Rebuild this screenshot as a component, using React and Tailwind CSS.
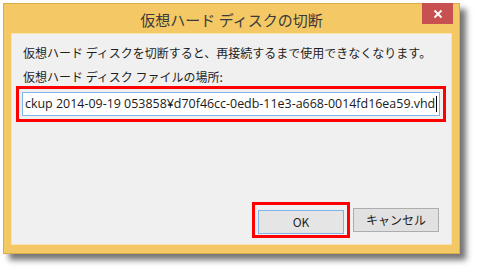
const JP = { fontFamily: '"Noto Sans CJK JP", "Noto Sans", sans-serif' };

function RedBox({ className, children }) {
  return <div className={`border-[3px] border-[#ff0000] p-[3px] ${className}`}>{children}</div>;
}

export default function App() {
  return (
    <div className="w-[477px] h-[271px] bg-white pt-[3px] pl-[3px]" style={JP}>
      <div className="w-[457px] h-[251px] bg-[#f4c965] border border-[#d9ac4c] shadow-[6px_6px_6px_rgba(0,0,0,0.55)] flex flex-col px-[7px] pb-[8px]">
        {/* title bar */}
        <div className="relative h-[29px] flex items-center justify-center">
          <span className="text-[15px] text-[#3a3a3a] leading-none pt-[2px]">仮想ハード ディスクの切断</span>
          <div className="absolute right-[-1px] top-[-1px] w-[31px] h-[21px] bg-[#c75050] flex items-center justify-center">
            <svg width="10" height="10" viewBox="0 0 10 10">
              <path d="M1.5 1.5 L8.5 8.5 M8.5 1.5 L1.5 8.5" stroke="white" strokeWidth="1.8" />
            </svg>
          </div>
        </div>

        {/* client area */}
        <div className="flex-1 bg-[#f0f0f0] border border-[#f7e3b0] flex flex-col pt-[11px]">
          <p className="pl-[11px] h-[16px] text-[12px] leading-[16px] text-[#1e1e1e]">
            仮想ハード ディスクを切断すると、再接続するまで使用できなくなります。
          </p>
          <p className="pl-[11px] mt-[8px] h-[16px] text-[12px] leading-[16px] text-[#1e1e1e]">
            仮想ハード ディスク ファイルの場所:
          </p>
          <RedBox className="ml-[4px] mt-[1px] w-[430px] h-[36px]">
            <div className="h-full bg-white border border-[#7eb4ea] flex items-center pl-[2px] overflow-hidden">
              <span
                className="whitespace-nowrap text-[12.45px] text-[#1a1a1a]"
                style={{ fontFamily: '"Open Sans", "Liberation Sans", sans-serif' }}
              >
                ckup 2014-09-19 053858¥d70f46cc-0edb-11e3-a668-0014fd16ea59.vhd
              </span>
              <span className="w-px h-[16px] bg-black ml-[1px] shrink-0" />
            </div>
          </RedBox>

          <div className="mt-auto mb-[6px] flex justify-end items-center pr-[12px]">
            <RedBox className="w-[98px] h-[36px] mr-[3px]">
              <button className="w-full h-full bg-[#e5e5e5] border border-[#7eb4ea] text-[12px] text-[#1e1e1e]">
                OK
              </button>
            </RedBox>
            <button className="w-[86px] h-[24px] bg-[#e1e1e1] border border-[#adadad] text-[12px] text-[#1e1e1e]">
              キャンセル
            </button>
          </div>
        </div>
      </div>
    </div>
  );
}
